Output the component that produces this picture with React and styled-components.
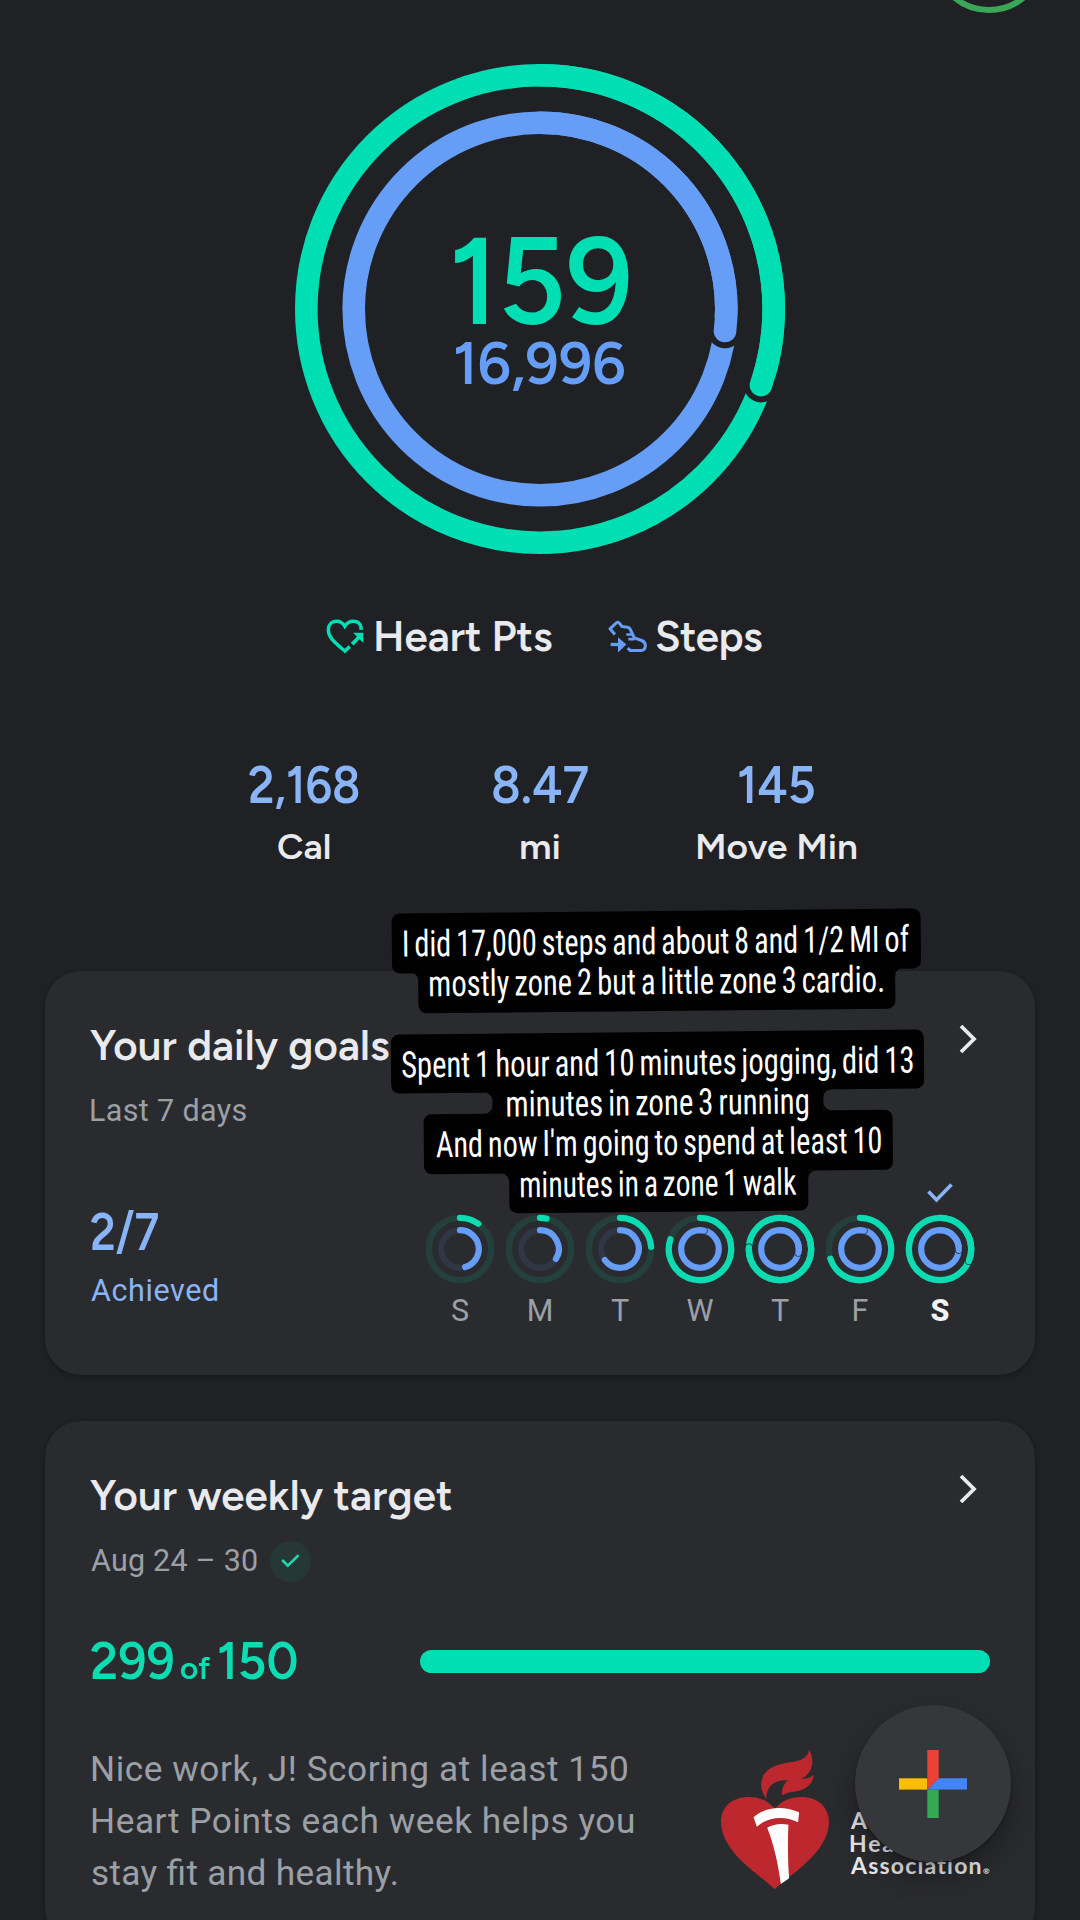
import React, { useLayoutEffect, useRef, useState } from 'react';
import styled, { createGlobalStyle, css } from 'styled-components';

const GREEN = '#00deb3';
const BLUE = '#669df6';
const LIGHT_BLUE = '#8ab4f8';
const TEXT = '#e8eaed';
const MUTED = '#9aa0a6';
const BG = '#1f2125';

const DISPLAY = `Figtree, Inter, Lato, sans-serif`;
const BODY = `Roboto, 'Liberation Sans', sans-serif`;
const CONDENSED = `'Roboto Condensed', Roboto, sans-serif`;

const days = [
  { label: 'S', heart: 36, steps: 164 },
  { label: 'M', heart: 12, steps: 122 },
  { label: 'T', heart: 86, steps: 234 },
  { label: 'W', heart: 288, steps: 372 },
  { label: 'T', heart: 633, steps: 462 },
  { label: 'F', heart: 252, steps: 372 },
  { label: 'S', heart: 473, steps: 453, today: true }
];

const stats = [
  { value: '2,168', width: 110, label: 'Cal', labelWidth: 52 },
  { value: '8.47', width: 95, label: 'mi', labelWidth: 38 },
  { value: '145', width: 75, label: 'Move Min', labelWidth: 159 }
];

const captions = [
  [
    { text: 'I did 17,000 steps and about 8 and 1/2 MI of', width: 506, box: 529 },
    { text: 'mostly zone 2 but a little zone 3 cardio.', width: 453, box: 477, join: 'top' }
  ],
  [
    { text: 'Spent 1 hour and 10 minutes jogging, did 13', width: 511, box: 533 },
    { text: 'minutes in zone 3 running', width: 301, box: 331, join: 'both' },
    { text: "And now I'm going to spend at least 10", width: 445, box: 469 },
    { text: 'minutes in a zone 1 walk', width: 276, box: 299, join: 'top' }
  ]
];

// Sets a text to an exact ink width, by tracking or (squeeze) by scaling the glyphs
function Fit({ width, squeeze, children }) {
  const ref = useRef(null);
  const [style, setStyle] = useState({});

  useLayoutEffect(() => {
    const cs = getComputedStyle(ref.current);
    const ctx = document.createElement('canvas').getContext('2d');
    ctx.font = `${cs.fontWeight} ${cs.fontSize} ${cs.fontFamily}`;
    ctx.wordSpacing = cs.wordSpacing;
    const m = ctx.measureText(children);
    const ink = m.actualBoundingBoxLeft + m.actualBoundingBoxRight;

    if (squeeze) {
      const k = width / ink;
      setStyle({ transform: `scaleX(${k})`, marginLeft: m.actualBoundingBoxLeft * k });
    } else {
      setStyle({
        letterSpacing: (width - ink) / (children.length - 1),
        marginLeft: m.actualBoundingBoxLeft
      });
    }
  }, [width, squeeze, children]);

  return (
    <FitBox $width={width}>
      <FitText ref={ref} style={style}>
        {children}
      </FitText>
    </FitBox>
  );
}

const point = (c, r, deg) => {
  const a = ((deg - 90) * Math.PI) / 180;
  return [c + r * Math.cos(a), c + r * Math.sin(a)];
};

// One progress ring; a sweep over 360 laps itself and leaves a thin gap at its tip
function Ring({ c, r, w, sweep, color, track, gap }) {
  const lapped = sweep > 360;
  const end = lapped ? sweep - 360 : sweep;
  const [x, y] = point(c, r, end);
  const large = end > 180 ? 1 : 0;

  return (
    <g fill="none" strokeWidth={w}>
      <circle cx={c} cy={c} r={r} stroke={lapped ? color : track} />
      {lapped && <circle cx={x} cy={y} r={w / 2 + gap} fill={BG} stroke="none" />}
      <path
        d={`M${c} ${c - r} A${r} ${r} 0 ${large} 1 ${x} ${y}`}
        stroke={color}
        strokeLinecap="round"
      />
    </g>
  );
}

const HeartIcon = () => (
  <svg width="38" height="35" viewBox="78 63 115 104">
    <path
      d="M184 95C186 79 176 69 161 69C148 69 140 76 135 84C130 76 122 69 110 69C95 69 85 80 85 95C85 120 110 137 135 159L150 145"
      fill="none"
      stroke={GREEN}
      strokeWidth="10.5"
    />
    <path d="M157 138L180 115" stroke={GREEN} strokeWidth="11" />
    <path d="M160 104H191V135Z" fill={GREEN} />
  </svg>
);

const ShoeIcon = () => (
  <svg width="39" height="33" viewBox="25 36 117 98">
    <g fill="none" stroke={BLUE} strokeWidth="9" strokeLinejoin="round">
      <path d="M46 79L31 62L50 44Q55 40 60 46L67 55L84 57Q90 58 92 64L104 89L126 97Q138 102 137 114Q136 127 124 127H92L84 120" />
      <path d="M80 79H97M86 93H105" strokeWidth="8" />
      <path d="M33 109H58" strokeWidth="10" />
    </g>
    <path d="M55 87L80 109L55 133Z" fill={BLUE} />
  </svg>
);

const Chevron = () => (
  <ChevronSvg width="18" height="30" viewBox="0 0 18 30">
    <path d="M2 2L15 15L2 28" fill="none" stroke={TEXT} strokeWidth="3.8" />
  </ChevronSvg>
);

const PlusIcon = () => (
  <svg width="68" height="68" viewBox="0 0 68 68">
    <path d="M0 28.3H28.3V39.6H0Z" fill="#fbbc04" />
    <path d="M28.3 39.6H39.7V68H28.3Z" fill="#34a853" />
    <path d="M39.7 28.3H68V39.6H28.3Z" fill="#4285f4" />
    <path d="M28.3 0H39.7V28.3L28.3 39.6Z" fill="#ea4335" />
  </svg>
);

const TorchLogo = () => (
  <svg width="108" height="141" viewBox="62 177 325 422">
    <path
      d="M327 177C345 210 340 247 303 267C318 265 332 262 341 254C338 285 312 300 285 304C268 306 256 309 247 316C242 300 250 282 263 270C225 268 198 285 198 327C188 310 182 295 183 280C186 235 230 222 270 216C305 211 325 200 327 177Z"
      fill="#bc282e"
    />
    <path
      d="M224 598C190 562 62 490 62 395C62 348 97 320 145 320C183 320 208 336 224 356C240 336 264 320 304 320C352 320 387 350 387 395C387 490 258 562 224 598Z"
      fill="#bc282e"
    />
    <path d="M160 381C200 347 250 347 297 366L294 396C255 377 205 377 170 410Z" fill="#fff" />
    <path d="M201 413C220 401 245 399 265 404C262 460 264 520 267 565L242 582C234 520 220 460 201 413Z" fill="#fff" />
  </svg>
);

export default function App() {
  return (
    <Screen>
      <GlobalStyle />

      <Header>
        <Avatar />
      </Header>

      <Summary>
        <svg width="490" height="490" viewBox="0 0 490 490">
          <Ring c={245} r={233.7} w={22.6} sweep={469} color={GREEN} gap={6} />
          <Ring c={245} r={186.3} w={22.6} sweep={456.8} color={BLUE} gap={6} />
        </svg>
        <Totals>
          <HeartTotal>
            <Fit width={174} squeeze>159</Fit>
          </HeartTotal>
          <StepTotal>
            <Fit width={169} squeeze>16,996</Fit>
          </StepTotal>
        </Totals>
      </Summary>

      <Legend>
        <LegendItem $gap={12}>
          <HeartIcon />
          <LegendText>
            <Fit width={176}>Heart Pts</Fit>
          </LegendText>
        </LegendItem>
        <LegendItem $gap={9}>
          <ShoeIcon />
          <LegendText>
            <Fit width={106}>Steps</Fit>
          </LegendText>
        </LegendItem>
      </Legend>

      <Stats>
        {stats.map(s => (
          <Stat key={s.label}>
            <StatValue>
              <Fit width={s.width} squeeze>{s.value}</Fit>
            </StatValue>
            <StatLabel>
              <Fit width={s.labelWidth} squeeze>{s.label}</Fit>
            </StatLabel>
          </Stat>
        ))}
      </Stats>

      <Card $top={94}>
        <CardHead>
          <CardTitle>
            <Fit width={299}>Your daily goals</Fit>
          </CardTitle>
          <Chevron />
        </CardHead>
        <Subtitle>
          <Fit width={155.5}>Last 7 days</Fit>
        </Subtitle>

        <GoalsBody>
          <Achieved>
            <BigNumber $color={LIGHT_BLUE}>
              <Fit width={67} squeeze>2/7</Fit>
            </BigNumber>
            <AchievedLabel>
              <Fit width={127}>Achieved</Fit>
            </AchievedLabel>
          </Achieved>
          <Days>
            {days.map((d, i) => (
              <Day key={i}>
                <CheckSlot>
                  {d.today && (
                    <svg width="26" height="20" viewBox="0 0 26 20">
                      <path d="M1.5 8.5L9.5 17L24.5 1.5" fill="none" stroke={LIGHT_BLUE} strokeWidth="3.6" />
                    </svg>
                  )}
                </CheckSlot>
                <svg width="70" height="70" viewBox="0 0 70 70">
                  <Ring c={35} r={31.2} w={6.3} sweep={d.heart} color="#0ddbb2" track="#24403c" gap={0.6} />
                  <Ring c={35} r={18.8} w={6.2} sweep={d.steps} color={BLUE} track="#2f3746" gap={0.6} />
                </svg>
                <DayLabel $today={d.today}>{d.label}</DayLabel>
              </Day>
            ))}
          </Days>
        </GoalsBody>
      </Card>

      <Card $top={46} $height={523}>
        <CardHead>
          <CardTitle>
            <Fit width={362}>Your weekly target</Fit>
          </CardTitle>
          <Chevron />
        </CardHead>
        <Subtitle>
          <Fit width={166}>Aug 24 – 30</Fit>
          <Badge>
            <svg width="19" height="14" viewBox="0 0 19 14">
              <path d="M1.2 6L6.8 11.6L17.5 1.2" fill="none" stroke="#1fd6af" strokeWidth="2.6" />
            </svg>
          </Badge>
        </Subtitle>

        <ScoreRow>
          <BigNumber $color="#0ddbb2">
            <Fit width={82} squeeze>299</Fit>
            <Of>
              <Fit width={29.5} squeeze>of</Fit>
            </Of>
            <Fit width={78} squeeze>150</Fit>
          </BigNumber>
          <Bar />
        </ScoreRow>

        <WeeklyFooter>
          <Message>
            <Fit width={535}>Nice work, J! Scoring at least 150</Fit>
            <Fit width={541}>Heart Points each week helps you</Fit>
            <Fit width={305}>stay fit and healthy.</Fit>
          </Message>
          <Sponsor>
            <TorchLogo />
            <SponsorName>
              <Fit width={106}>American</Fit>
              <Fit width={65}>Heart</Fit>
              <div>
                <Fit width={131}>Association</Fit>
                <Registered>®</Registered>
              </div>
            </SponsorName>
          </Sponsor>
        </WeeklyFooter>
      </Card>

      <Fab>
        <PlusIcon />
      </Fab>

      <Captions>
        {captions.map((lines, i) => (
          <CaptionBlock key={i}>
            {lines.map(l => (
              <CaptionLine key={l.text} $width={l.box} $join={l.join}>
                <CaptionText>
                  <Fit width={l.width} squeeze>
                    {l.text}
                  </Fit>
                </CaptionText>
              </CaptionLine>
            ))}
          </CaptionBlock>
        ))}
      </Captions>
    </Screen>
  );
}

const GlobalStyle = createGlobalStyle`
  * {
    box-sizing: border-box;
  }

  body {
    margin: 0;
    background: ${BG};
  }

  svg {
    display: block;
    flex-shrink: 0;
  }
`;

const FitBox = styled.span`
  display: block;
  flex-shrink: 0;
  width: ${p => p.$width}px;
  white-space: nowrap;
`;

const FitText = styled.span`
  display: inline-block;
  transform-origin: 0 50%;
`;

const Screen = styled.div`
  position: relative;
  width: 1080px;
  height: 1920px;
  overflow: hidden;
  background: ${BG};
  color: ${TEXT};
  font-family: ${DISPLAY};
  font-weight: 580;
`;

const Header = styled.div`
  display: flex;
  justify-content: flex-end;
  align-items: flex-end;
  height: 13px;
  padding-right: 34px;
`;

const Avatar = styled.div`
  width: 114px;
  height: 114px;
  border: 6px solid #3aa757;
  border-radius: 50%;
`;

const Summary = styled.div`
  position: relative;
  width: 490px;
  margin: 51px auto 0;
`;

const Totals = styled.div`
  position: absolute;
  inset: 0;
  display: flex;
  flex-direction: column;
  align-items: center;
  padding-top: 167px;
`;

const HeartTotal = styled.div`
  padding-left: 4px;
  color: ${GREEN};
  font-size: 123px;
  font-weight: 640;
  line-height: 100px;
`;

const StepTotal = styled.div`
  color: ${BLUE};
  font-size: 61px;
  font-weight: 650;
  line-height: 64px;
`;

const Legend = styled.div`
  display: flex;
  justify-content: center;
  gap: 56px;
  height: 60px;
  margin-top: 52px;
  padding-left: 8px;
  font-size: 42px;
  line-height: 60px;
`;

const LegendItem = styled.div`
  display: flex;
  align-items: center;
  gap: ${p => p.$gap}px;
`;

const LegendText = styled.div`
  padding-top: 2px;
`;

const Stats = styled.div`
  display: grid;
  grid-template-columns: repeat(3, 236px);
  justify-content: center;
  margin-top: 87px;
`;

const Stat = styled.div`
  display: flex;
  flex-direction: column;
  align-items: center;
`;

const StatValue = styled.div`
  color: ${LIGHT_BLUE};
  font-size: 52px;
  font-weight: 640;
  line-height: 64px;
`;

const StatLabel = styled.div`
  padding-left: 1px;
  font-size: 35px;
  line-height: 60px;
`;

const Card = styled.section`
  height: ${p => p.$height || 404}px;
  margin: ${p => p.$top}px 45px 0;
  padding: 45px 45px 0 46px;
  border-radius: 36px;
  background: #2a2b2f;
  box-shadow: 0 2px 4px rgba(0, 0, 0, 0.3);
`;

const CardHead = styled.div`
  display: flex;
  justify-content: space-between;
  margin-left: -1px;
  padding-right: 13px;
`;

const CardTitle = styled.div`
  font-size: 42px;
  line-height: 60px;
`;

const ChevronSvg = styled.svg`
  margin-top: 8px;
`;

const Subtitle = styled.div`
  display: flex;
  align-items: center;
  gap: 13px;
  margin-top: 13px;
  color: ${MUTED};
  font: 400 30.5px/44px ${BODY};
`;

const GoalsBody = styled.div`
  display: flex;
  justify-content: space-between;
  margin-top: 47px;
`;

const Achieved = styled.div`
  padding-top: 20px;
`;

const BigNumber = styled.div`
  display: flex;
  align-items: baseline;
  gap: 8px;
  color: ${p => p.$color};
  font-size: 52px;
  font-weight: 640;
  line-height: 64px;
`;

const AchievedLabel = styled.div`
  margin-top: 5px;
  color: ${LIGHT_BLUE};
  font: 400 30.5px/44px ${BODY};
`;

const Days = styled.div`
  display: flex;
  margin-right: 10px;
`;

const Day = styled.div`
  display: flex;
  flex-direction: column;
  align-items: center;
  width: 80px;
`;

const CheckSlot = styled.div`
  height: 34px;
  padding-top: 3px;
`;

const DayLabel = styled.div`
  margin-top: 5px;
  color: ${p => (p.$today ? '#f1f3f4' : MUTED)};
  font: ${p => (p.$today ? 800 : 400)} 30.5px/44px ${BODY};
`;

const Badge = styled.div`
  display: flex;
  align-items: center;
  justify-content: center;
  width: 41px;
  height: 41px;
  border-radius: 50%;
  background: #263836;
`;

const ScoreRow = styled.div`
  display: flex;
  align-items: center;
  justify-content: space-between;
  height: 64px;
  margin-top: 46px;
`;

const Of = styled.span`
  font-size: 31px;
  line-height: 1;
`;

const Bar = styled.div`
  width: 570px;
  height: 23px;
  border-radius: 12px;
  background: ${GREEN};
`;

const WeeklyFooter = styled.div`
  display: flex;
  justify-content: space-between;
  margin-top: 50px;
`;

const Message = styled.div`
  padding-left: 1px;
  color: ${MUTED};
  font: 400 35.2px/52px ${BODY};
  font-feature-settings: 'liga' 1;
`;

const Sponsor = styled.div`
  display: flex;
  gap: 21px;
  width: 269px;
  padding-top: 6px;
`;

const SponsorName = styled.div`
  padding-top: 60px;
  color: #ececec;
  font: 700 23px/22.5px Lato, sans-serif;

  div {
    display: flex;
    align-items: baseline;
    gap: 2px;
  }
`;

const Registered = styled.span`
  font-size: 8px;
`;

const Fab = styled.div`
  position: absolute;
  right: 69px;
  bottom: 58px;
  display: flex;
  align-items: center;
  justify-content: center;
  width: 156px;
  height: 157px;
  border-radius: 50%;
  background: #36373a;
  box-shadow: 0 2px 3px rgba(0, 0, 0, 0.25), 0 14px 30px rgba(0, 0, 0, 0.32);
`;

const Captions = styled.div`
  position: absolute;
  top: 911px;
  left: 387px;
  display: flex;
  flex-direction: column;
  gap: 21px;
  width: 540px;
  transform: rotate(-0.56deg);
`;

const CaptionBlock = styled.div`
  display: flex;
  flex-direction: column;
  align-items: center;
`;

/* rounded inner corner where a narrow line meets a wider one */
const joins = {
  top: css`
    height: 8px;
    background: radial-gradient(circle at var(--side) 100%, transparent 7.5px, #000 8.2px);
  `,
  both: css`
    height: 21px;
    background:
      radial-gradient(circle at var(--side) 8px, transparent 7.5px, #000 8.2px) 0 0 / 100% 8px no-repeat,
      radial-gradient(circle at var(--side) 0, transparent 7.5px, #000 8.2px) 0 100% / 100% 8px no-repeat;
  `
};

const CaptionLine = styled.div`
  position: relative;
  width: ${p => p.$width}px;
  height: 59.5px;
  border-radius: 8px;
  background: #000;

  & + & {
    margin-top: -19.2px;
  }

  &::before,
  &::after {
    position: absolute;
    top: 19px;
    width: 8px;
    ${p => p.$join && css`content: '';`}
    ${p => joins[p.$join]}
  }

  &::before {
    --side: 0;
    right: 100%;
  }

  &::after {
    --side: 100%;
    left: 100%;
  }
`;

const CaptionText = styled.div`
  position: relative;
  z-index: 1;
  display: flex;
  justify-content: center;
  padding-left: 1px;
  color: #fff;
  font: 450 36.5px/61px ${CONDENSED};
  word-spacing: -2.5px;
`;
